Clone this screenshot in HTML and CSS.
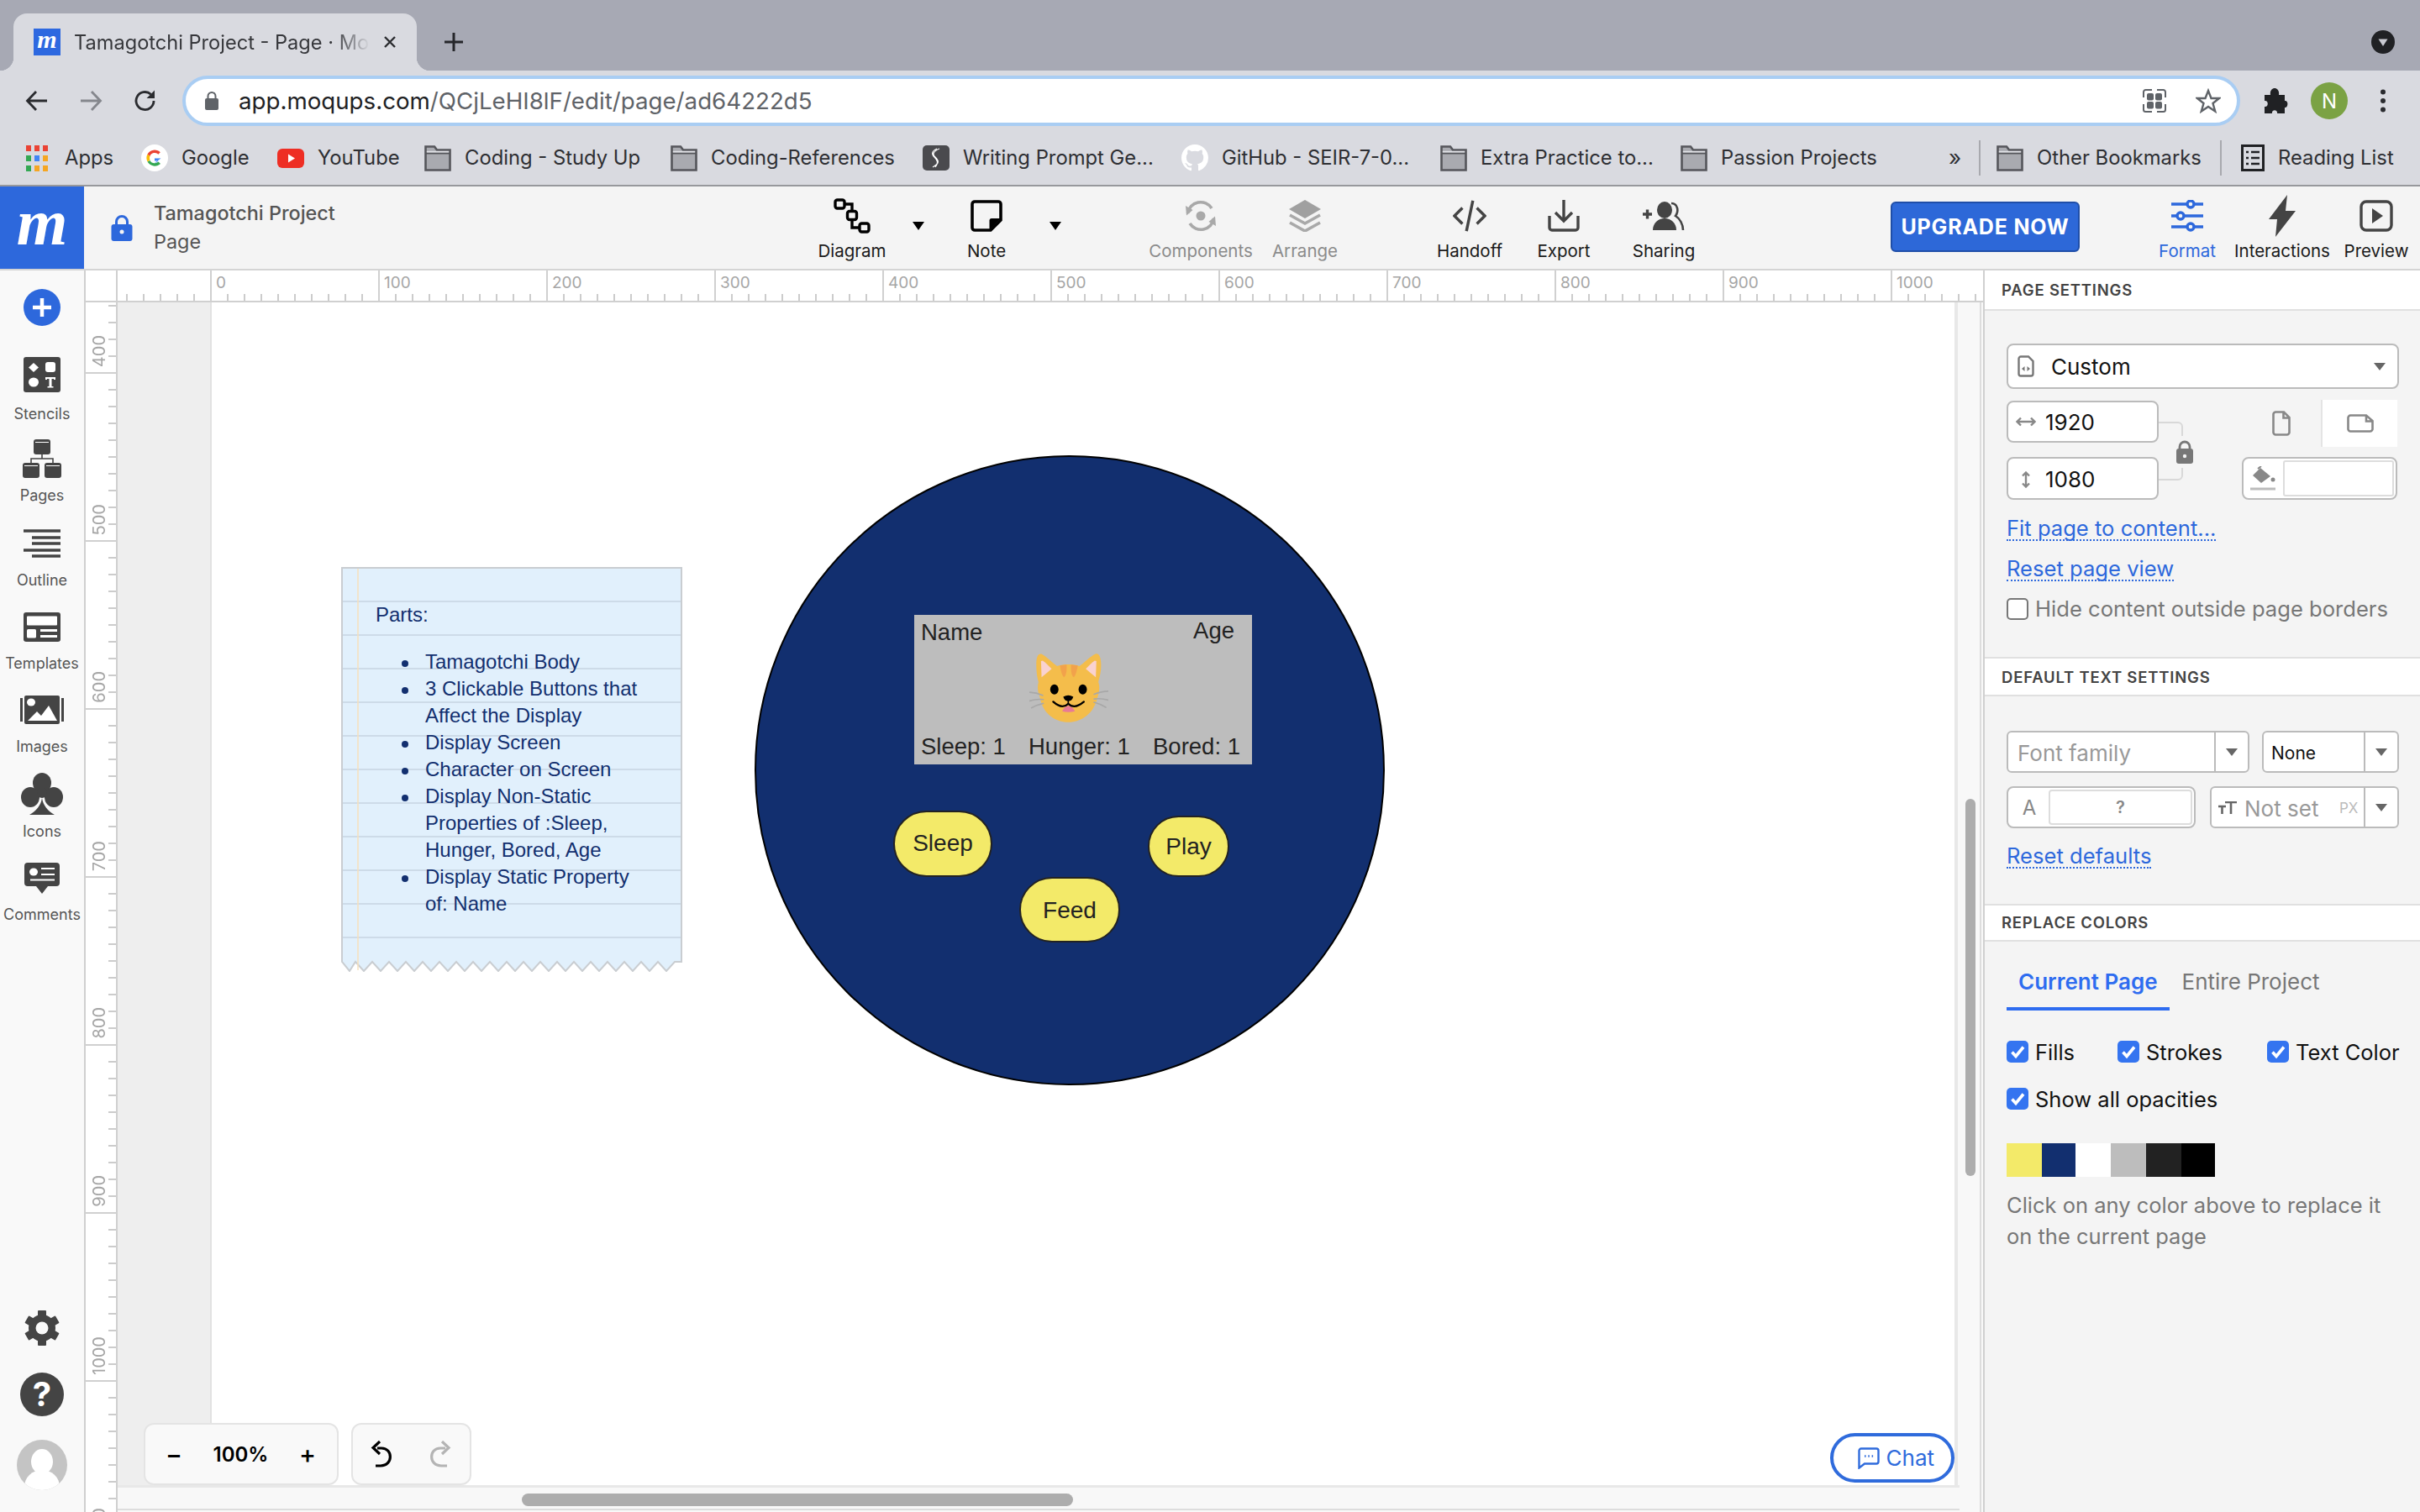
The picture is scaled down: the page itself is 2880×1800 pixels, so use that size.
FILE: index.html
```html
<!DOCTYPE html>
<html lang="en">
<head>
<meta charset="utf-8">
<title>Tamagotchi Project - Page · Moqups</title>
<link rel="stylesheet" href="styles.css">
</head>
<body>
<div class="screen">

  <div class="tabstrip">
    <div class="tab">
      <span class="favicon">m</span>
      <span class="tab-title">Tamagotchi Project - Page · Moqups</span>
      <svg class="tab-close" viewBox="0 0 18 18"><path d="M3 3 15 15M15 3 3 15" stroke="#2b2c30" stroke-width="2.4" fill="none"/></svg>
    </div>
    <svg class="new-tab" viewBox="0 0 24 24"><path d="M12 1V23M1 12H23" stroke="#26272b" stroke-width="3" fill="none"/></svg>
    <span class="tab-menu"><svg viewBox="0 0 28 28"><circle cx="14" cy="14" r="14" fill="#202124"/><path d="M8.500 10.500H19.500L14 19Z" fill="#c9cad2"/></svg></span>
  </div>

  <div class="addressbar">
    <svg class="nav-ico" viewBox="0 0 28 28"><path d="M26 14H3M13 3 2.500 14 13 25" stroke="#2a2b2f" stroke-width="2.800" fill="none"/></svg>
    <svg class="nav-ico" viewBox="0 0 28 28"><path d="M2 14H25M15 3 25.500 14 15 25" stroke="#85878d" stroke-width="2.800" fill="none"/></svg>
    <svg class="nav-ico" viewBox="0 0 28 28"><path d="M24 14A10.500 10.500 0 1 1 20.500 6.200" stroke="#2a2b2f" stroke-width="2.800" fill="none"/><path d="M25 1.500V11H15.500Z" fill="#2a2b2f"/></svg>
    <div class="urlbar">
      <svg class="url-lock" viewBox="0 0 18 24"><path d="M4.500 11V6.500a4.500 4.500 0 0 1 9 0V11" stroke="#5f6368" stroke-width="2" fill="none"/><rect x="1" y="9" width="16" height="14" rx="2" fill="#5f6368"/></svg>
      <span class="url-text"><span class="url-host">app.moqups.com</span>/QCjLeHI8lF/edit/page/ad64222d5</span>
      <svg class="url-qr" viewBox="0 0 30 28"><path d="M2 10V3.500a2.500 2.500 0 0 1 2.500-2.500H12M18 1h7.500a2.500 2.500 0 0 1 2.500 2.500V10M28 18v6.500a2.500 2.500 0 0 1-2.500 2.500H18M12 27H4.500a2.500 2.500 0 0 1-2.500-2.500V18" stroke="#5f6368" stroke-width="2" fill="none"/><rect x="6" y="5" width="8" height="8.500" rx="2" fill="#5f6368"/><rect x="16" y="5" width="8" height="8.500" rx="2" fill="#5f6368"/><rect x="6" y="15" width="8" height="8.500" rx="2" fill="#5f6368"/><rect x="16" y="15" width="8" height="8.500" rx="2" fill="#5f6368"/></svg>
      <svg class="url-star" viewBox="0 0 30 30"><path d="M15 3 18.500 12H28L20.500 18 23.200 27.500 15 22 6.800 27.500 9.500 18 2 12H11.500Z" stroke="#5f6368" stroke-width="2.400" fill="none"/></svg>
    </div>
    <svg class="ext-ico" viewBox="0 0 30 32"><path d="M2 9H9C8 3 12 1 14 1S20 3 19 9H26V16C31 15 30 25 26 24V31H17C18 26 10 26 11 31H2V23C7 24 7 15 2 16Z" fill="#202124"/></svg>
    <span class="profile">N</span>
    <svg class="dots-ico" viewBox="0 0 8 28"><circle cx="4" cy="3.500" r="3" fill="#2a2b2f"/><circle cx="4" cy="14" r="3" fill="#2a2b2f"/><circle cx="4" cy="24.500" r="3" fill="#2a2b2f"/></svg>
  </div>

  <div class="bookmarks">
    <div class="bm">
      <span class="apps-grid"><i class="c-r"></i><i class="c-r"></i><i class="c-r"></i><i class="c-g"></i><i class="c-b"></i><i class="c-y"></i><i class="c-g"></i><i class="c-y"></i><i class="c-y"></i></span>
      <span>Apps</span>
    </div>
    <div class="bm">
      <svg class="bm-ico" viewBox="0 0 32 32"><circle cx="16" cy="16" r="16" fill="#fff"/><path d="M23.500 16.500H16V19.500H20.300A5 5 0 0 1 16 22Z" fill="#4285f4"/><path d="M10.500 19A6 6 0 0 0 16 22.300A6 6 0 0 0 20.500 20.500L23 23A10 10 0 0 1 7.500 20.500Z" fill="#34a853"/><path d="M7.500 11.500A10 10 0 0 0 7.500 20.500L10.500 18.500A6 6 0 0 1 10.500 13.500Z" fill="#fbbc05"/><path d="M7.500 11.500A10 10 0 0 1 22.800 9.200L20.300 11.700A6 6 0 0 0 10.500 13.700Z" fill="#ea4335"/></svg>
      <span>Google</span>
    </div>
    <div class="bm">
      <svg class="bm-ico" viewBox="0 0 32 32"><rect x="0" y="5" width="32" height="23" rx="6" fill="#ee2e24"/><path d="M13 11.500 21 16.500 13 21.500Z" fill="#fff"/></svg>
      <span>YouTube</span>
    </div>
    <div class="bm">
      <svg class="bm-ico" viewBox="0 0 32 32"><use href="#folder"/></svg>
      <span>Coding - Study Up</span>
    </div>
    <div class="bm">
      <svg class="bm-ico" viewBox="0 0 32 32"><use href="#folder"/></svg>
      <span>Coding-References</span>
    </div>
    <div class="bm">
      <svg class="bm-ico" viewBox="0 0 32 32"><rect x="0" y="1" width="32" height="30" rx="5" fill="#4a4a4e"/><path d="M20 5C13 8 11 11 15 15S21 22 12 27M17 5C11 8 10 11 14 15S19 22 15 27" stroke="#fff" stroke-width="1.200" fill="none"/></svg>
      <span>Writing Prompt Ge...</span>
    </div>
    <div class="bm">
      <svg class="bm-ico" viewBox="0 0 16 16"><path fill="#fff" d="M8 0C3.580 0 0 3.580 0 8c0 3.540 2.290 6.530 5.470 7.590.4.070.55-.17.55-.38 0-.19-.01-.82-.01-1.490-2.010.37-2.530-.49-2.690-.94-.09-.23-.48-.94-.82-1.130-.28-.15-.68-.52-.01-.53.63-.01 1.080.58 1.230.82.72 1.210 1.870.87 2.330.66.07-.52.28-.87.51-1.070-1.780-.2-3.640-.89-3.640-3.950 0-.87.31-1.590.82-2.150-.08-.2-.36-1.020.08-2.120 0 0 .67-.21 2.200.82.64-.18 1.320-.27 2-.27.68 0 1.360.09 2 .27 1.530-1.040 2.200-.82 2.200-.82.44 1.100.16 1.920.08 2.120.51.56.82 1.270.82 2.150 0 3.070-1.870 3.750-3.650 3.950.29.25.54.73.54 1.480 0 1.070-.01 1.930-.01 2.200 0 .21.15.46.55.38A8.013 8.013 0 0016 8c0-4.420-3.580-8-8-8z"/></svg>
      <span>GitHub - SEIR-7-0...</span>
    </div>
    <div class="bm">
      <svg class="bm-ico" viewBox="0 0 32 32"><use href="#folder"/></svg>
      <span>Extra Practice to...</span>
    </div>
    <div class="bm">
      <svg class="bm-ico" viewBox="0 0 32 32"><use href="#folder"/></svg>
      <span>Passion Projects</span>
    </div>
    <div class="bm-more">»</div>
    <div class="bm-sep"></div>
    <div class="bm">
      <svg class="bm-ico" viewBox="0 0 32 32"><use href="#folder"/></svg>
      <span>Other Bookmarks</span>
    </div>
    <div class="bm-sep"></div>
    <div class="bm">
      <svg class="bm-ico bm-ico-list" viewBox="0 0 28 32"><rect x="1.500" y="1.500" width="25" height="29" stroke="#202124" stroke-width="3" fill="none"/><path d="M6 9H9M12 9H22M6 16H9M12 16H22M6 23H9M12 23H22" stroke="#202124" stroke-width="2.400" fill="none"/></svg>
      <span>Reading List</span>
    </div>
  </div>

  <svg class="defs" width="0" height="0"><defs><g id="folder"><path d="M1.500 30.500V2.500H12L15 6.500H30.500V30.500Z" fill="#a9aab0" stroke="#55565b" stroke-width="2.600"/><path d="M1.500 10.500H30.500" stroke="#55565b" stroke-width="2"/><path d="M2.800 7.800H29.200V9.500H2.800Z" fill="#e3e4e8"/></g></defs></svg>

  <div class="topbar">
    <div class="logo">m</div>
    <div class="project">
      <svg class="project-lock" viewBox="0 0 26 32"><path d="M6.500 14V9a6.500 6.500 0 0 1 13 0V14" stroke="#2d68dc" stroke-width="3" fill="none"/><rect x="0.500" y="12" width="25" height="20" rx="3" fill="#2d68dc"/><circle cx="13" cy="21" r="2.500" fill="#f4f4f4"/></svg>
      <div class="project-names"><div>Tamagotchi Project</div><div>Page</div></div>
    </div>
    <div class="tool">
      <svg class="tool-ico i44" viewBox="0 0 44 44"><g fill="none" stroke="#000" stroke-width="3.400"><rect x="2" y="3" width="11" height="10" rx="2.500"/><rect x="16.500" y="16.500" width="11" height="10" rx="2.500"/><rect x="31" y="31" width="11" height="10" rx="2.500"/><path d="M13 8H22V16.500M22 26.500V36H31"/></g></svg>
      <span>Diagram</span>
    </div>
    <div class="caret"></div>
    <div class="tool">
      <svg class="tool-ico i38" viewBox="0 0 38 38"><path d="M5 2H33A3 3 0 0 1 36 5V24L24 36H5A3 3 0 0 1 2 33V5A3 3 0 0 1 5 2Z" fill="none" stroke="#000" stroke-width="3.600"/><path d="M36 22H25A2.500 2.500 0 0 0 22.500 24.500V36Z" fill="#000"/></svg>
      <span>Note</span>
    </div>
    <div class="caret"></div>
    <div class="gap"></div>
    <div class="tool tool-off">
      <svg class="tool-ico i38" viewBox="0 0 38 38"><circle cx="19" cy="19" r="5.500" fill="#a9a9a9"/><path d="M3.500 16A15.500 15.500 0 0 1 32 10M34.500 22A15.500 15.500 0 0 1 6 28" stroke="#a9a9a9" stroke-width="3.600" fill="none"/><path d="M1 7 9.500 12 2 18.500ZM37 31 28.500 26 36 19.500Z" fill="#a9a9a9"/></svg>
      <span>Components</span>
    </div>
    <div class="tool tool-off">
      <svg class="tool-ico i40" viewBox="0 0 40 38"><path d="M20 0 39 11 20 22 1 11Z" fill="#a0a0a0"/><path d="M2 18 20 28 38 18M2 27 20 37 38 27" stroke="#a9a9a9" stroke-width="3.600" fill="none"/></svg>
      <span>Arrange</span>
    </div>
    <div class="gap"></div>
    <div class="tool">
      <svg class="tool-ico i40" viewBox="0 0 42 38"><path d="M12 9 2 19 12 29M30 9 40 19 30 29M25 0 17 38" stroke="#444" stroke-width="3.600" fill="none"/></svg>
      <span>Handoff</span>
    </div>
    <div class="tool">
      <svg class="tool-ico i38" viewBox="0 0 38 38"><path d="M19 0V24M9 15 19 25 29 15M2 19V33A3 3 0 0 0 5 36H33A3 3 0 0 0 36 33V19" stroke="#444" stroke-width="3.400" fill="none"/></svg>
      <span>Export</span>
    </div>
    <div class="tool">
      <svg class="tool-ico i48" viewBox="0 0 50 36"><path d="M0 15H11M5.500 9.500V20.500" stroke="#444" stroke-width="3.400" fill="none"/><ellipse cx="26" cy="10" rx="9" ry="10" fill="#444"/><path d="M12 34C12 26 18 20 26 20S40 26 40 34Z" fill="#444"/><path d="M34 2C42 2 43 12 39 17C44 20 48 27 48 34" stroke="#444" stroke-width="2.600" fill="none"/></svg>
      <span>Sharing</span>
    </div>
    <div class="gap"></div>
    <div class="upgrade">UPGRADE NOW</div>
    <div class="gap"></div>
    <div class="tool tool-on">
      <svg class="tool-ico i38" viewBox="0 0 38 38"><g stroke="#2d68dc" stroke-width="3.400" fill="#f4f4f4"><path d="M0 5H38M0 19H38M0 32H38" fill="none"/><circle cx="23" cy="5" r="4"/><circle cx="11" cy="19" r="4"/><circle cx="23" cy="32" r="4"/></g></svg>
      <span>Format</span>
    </div>
    <div class="tool">
      <svg class="tool-ico i-bolt" viewBox="0 0 32 50"><path d="M22 0 0 29H10L8 50 32 19H20Z" fill="#444"/></svg>
      <span>Interactions</span>
    </div>
    <div class="tool">
      <svg class="tool-ico i40" viewBox="0 0 40 38"><rect x="2" y="2" width="36" height="34" rx="6" stroke="#444" stroke-width="3.400" fill="none"/><path d="M15 10 28 19 15 28Z" fill="#444"/></svg>
      <span>Preview</span>
    </div>
  </div>

  <div class="workspace">
    <nav class="sidebar">
      <svg class="side-add" viewBox="0 0 44 44"><circle cx="22" cy="22" r="22" fill="#2d68dc"/><path d="M22 11V33M11 22H33" stroke="#fff" stroke-width="4.500"/></svg>
      <div class="side-item s-stencils">
        <svg viewBox="0 0 44 42" class="side-ico h42"><rect width="44" height="42" rx="3" fill="#444"/><path d="M12 7 18 12.500 12 18 6 12.500Z" fill="#fff"/><rect x="26" y="6" width="12" height="12" rx="3" fill="#fff"/><ellipse cx="12" cy="30" rx="6" ry="5.500" fill="#fff"/><path d="M26 24H38V27H36V26H33.500V35H35.500V36.500H28.500V35H30.500V26H28V27H26Z" fill="#fff"/></svg>
        <span>Stencils</span>
      </div>
      <div class="side-item s-pages">
        <svg viewBox="0 0 46 46" class="side-ico h46"><rect x="13" y="0" width="20" height="18" rx="3" fill="#444"/><rect x="0" y="28" width="20" height="18" rx="3" fill="#444"/><rect x="26" y="28" width="20" height="18" rx="3" fill="#444"/><path d="M15 3.500H31M2 31.500H18M28 31.500H44" stroke="#fff" stroke-width="1.200"/><path d="M23 18V23M10 28V23H36V28" stroke="#444" stroke-width="1.600" fill="none"/></svg>
        <span>Pages</span>
      </div>
      <div class="side-item s-outline">
        <svg viewBox="0 0 44 34" class="side-ico h34"><path d="M0 2H44M10 10H44M10 17H44M0 25H44M10 32H44" stroke="#444" stroke-width="3.600"/></svg>
        <span>Outline</span>
      </div>
      <div class="side-item s-templates">
        <svg viewBox="0 0 44 35" class="side-ico h35"><rect width="44" height="35" rx="3" fill="#444"/><rect x="4" y="4.500" width="36" height="11" rx="1" fill="#fff"/><rect x="4" y="20" width="11" height="10.500" rx="1.500" fill="#fff"/><path d="M20 21.500H40M20 28.500H40" stroke="#fff" stroke-width="3"/></svg>
        <span>Templates</span>
      </div>
      <div class="side-item s-images">
        <svg viewBox="0 0 52 34" class="side-ico h34 w52"><rect x="0" y="3" width="3" height="28" fill="#444"/><rect x="49" y="3" width="3" height="28" fill="#444"/><rect x="5" y="0" width="42" height="34" rx="2" fill="#444"/><ellipse cx="13" cy="8" rx="5" ry="4.500" fill="#fff"/><path d="M9 30 20 19 25 24 34 12 44 30Z" fill="#fff"/></svg>
        <span>Images</span>
      </div>
      <div class="side-item s-icons">
        <svg viewBox="0 0 50 50" class="side-ico h50"><ellipse cx="25" cy="12" rx="11" ry="12" fill="#444"/><ellipse cx="11" cy="29" rx="11" ry="12" fill="#444"/><ellipse cx="39" cy="29" rx="11" ry="12" fill="#444"/><circle cx="25" cy="24" r="6" fill="#444"/><path d="M25 30C24 38 18 46 10 50H40C32 46 26 38 25 30Z" fill="#444"/></svg>
        <span>Icons</span>
      </div>
      <div class="side-item s-comments">
        <svg viewBox="0 0 42 38" class="side-ico h38"><path d="M4 0H38A4 4 0 0 1 42 4V24A4 4 0 0 1 38 28H28L21 37 14 28H4A4 4 0 0 1 0 24V4A4 4 0 0 1 4 0Z" fill="#444"/><ellipse cx="11" cy="11" rx="5" ry="4.500" fill="#fff"/><path d="M20 7H36M20 14H36M7 20.500H36" stroke="#fff" stroke-width="2.200"/></svg>
        <span>Comments</span>
      </div>
      <div class="side-bottom">
        <svg viewBox="0 0 44 42" class="side-ico h42"><g fill="#444"><rect x="17" y="0" width="10" height="42" rx="1"/><rect x="17" y="0" width="10" height="42" rx="1" transform="rotate(60 22 21)"/><rect x="17" y="0" width="10" height="42" rx="1" transform="rotate(120 22 21)"/><circle cx="22" cy="21" r="16"/></g><circle cx="22" cy="21" r="7.500" fill="#f9f9f9"/></svg>
        <div class="help">?</div>
        <svg viewBox="0 0 60 60" class="avatar"><defs><clipPath id="avatar-clip"><circle cx="30" cy="30" r="30"/></clipPath></defs><circle cx="30" cy="30" r="30" fill="#c4c4c4"/><g clip-path="url(#avatar-clip)" fill="#fff"><ellipse cx="30" cy="26" rx="13" ry="15"/><ellipse cx="30" cy="56" rx="21" ry="20"/></g></svg>
      </div>
    </nav>

    <div class="stage">
      <div class="ruler-top">
        <div class="rt-corner"></div>
        <div class="rt-lead"></div>
        <div class="rt-cell">0</div><div class="rt-cell">100</div><div class="rt-cell">200</div><div class="rt-cell">300</div><div class="rt-cell">400</div><div class="rt-cell">500</div><div class="rt-cell">600</div><div class="rt-cell">700</div><div class="rt-cell">800</div><div class="rt-cell">900</div><div class="rt-cell rt-last">1000</div>
      </div>
      <div class="stage-body">
        <div class="ruler-left">
          <div class="rl-cell rl-first"><span>400</span></div><div class="rl-cell"><span>500</span></div><div class="rl-cell"><span>600</span></div><div class="rl-cell"><span>700</span></div><div class="rl-cell"><span>800</span></div><div class="rl-cell"><span>900</span></div><div class="rl-cell"><span>1000</span></div><div class="rl-cell"><span>1100</span></div>
        </div>
        <div class="canvas">
          <div class="pasteboard"></div>
          <div class="page"></div>

          <div class="note">
            <svg class="note-bg" viewBox="0 0 406 482"><path d="M1 1H405V470H397L387 481 377 470 367 481 357 470 347 481 337 470 327 481 317 470 307 481 297 470 287 481 277 470 267 481 257 470 247 481 237 470 227 481 217 470 207 481 197 470 187 481 177 470 167 481 157 470 147 481 137 470 127 481 117 470 107 481 97 470 87 481 77 470 67 481 57 470 47 481 37 470 27 481 17 470 10 481 1 470Z" fill="#e1f0fc" stroke="#c9cdd1" stroke-width="2"/><path d="M2 41H404M2 81H404M2 121H404M2 161H404M2 201H404M2 241H404M2 281H404M2 321H404M2 361H404M2 401H404M2 441H404" stroke="#c6d4e1" stroke-width="1.500"/><path d="M20 2V480" stroke="#f7e0bd" stroke-width="1.500"/></svg>
            <div class="note-text">
              <p>Parts:</p>
              <ul>
                <li>Tamagotchi Body</li>
                <li>3 Clickable Buttons that Affect the Display</li>
                <li>Display Screen</li>
                <li>Character on Screen</li>
                <li>Display Non-Static Properties of :Sleep, Hunger, Bored, Age</li>
                <li>Display Static Property of: Name</li>
              </ul>
            </div>
          </div>

          <div class="body-circle"></div>
          <div class="lcd">
            <div class="lcd-top"><span>Name</span><span class="lcd-age">Age</span></div>
            <svg class="cat" viewBox="0 0 284 250">
              <path d="M25 40C25 15 32 0 45 5C60 12 85 38 100 48C125 40 155 40 180 48C195 38 222 10 238 4C252 0 258 20 258 45C258 70 252 90 248 105C254 120 252 140 245 160C230 230 175 250 140 250C105 250 50 230 38 160C30 140 28 120 33 105C28 90 25 65 25 40Z" fill="#f4bd4b"/>
              <path d="M42 30L44 88Q62 74 80 58Q62 38 48 28Z" fill="#f9d2d0"/><path d="M241 30L239 88Q221 74 203 58Q221 38 235 28Z" fill="#f9d2d0"/>
              <path d="M110 46Q115 80 124 88Q136 82 134 43ZM174 46Q169 80 160 88Q148 82 150 43Z" fill="#f2a24b"/>
              <ellipse cx="90" cy="132" rx="15" ry="18" fill="#000"/><ellipse cx="192" cy="132" rx="15" ry="18" fill="#000"/>
              <path d="M118 210Q140 172 164 210Q140 216 118 210Z" fill="#e87a96"/>
              <path d="M86 176Q118 205 140 183Q162 205 196 176" stroke="#000" stroke-width="7" fill="none" stroke-linecap="round"/>
              <path d="M122 158Q140 148 158 158Q154 172 140 174Q126 172 122 158Z" fill="#000"/><path d="M140 172V184" stroke="#000" stroke-width="5"/>
              <path d="M1 142Q25 143 48 153M1 173Q25 165 50 168M8 198Q25 188 50 182M283 138Q260 138 233 149M283 170Q260 163 233 166M275 196Q258 185 233 178" stroke="#a8a8a8" stroke-width="5" fill="none" stroke-linecap="round"/>
            </svg>
            <div class="lcd-stats"><span>Sleep: 1</span><span>Hunger: 1</span><span>Bored: 1</span></div>
          </div>
          <div class="pill pill-sleep">Sleep</div>
          <div class="pill pill-play">Play</div>
          <div class="pill pill-feed">Feed</div>

          <div class="zoom-tools">
            <div class="tools-group tools-zoom">
              <span class="z-btn">−</span><span class="z-val">100%</span><span class="z-btn">+</span>
            </div>
            <div class="tools-group tools-undo">
              <svg viewBox="0 0 28 32" class="undo-ico"><path d="M8 9H13C27 9 27 30 12 30H6" stroke="#000" stroke-width="3.200" fill="none"/><path d="M11 1 3 8.500 11 16" stroke="#000" stroke-width="3.200" fill="none"/></svg>
              <svg viewBox="0 0 28 32" class="undo-ico"><path d="M21 9H15C1 9 1 30 16 30H23" stroke="#b4b4b4" stroke-width="3.200" fill="none"/><path d="M17 1 25 8.500 17 16" stroke="#b4b4b4" stroke-width="3.200" fill="none"/></svg>
            </div>
          </div>

          <div class="chat">
            <svg class="chat-ico" viewBox="0 0 26 26"><path d="M4 1.500H22A2.500 2.500 0 0 1 24.500 4V17A2.500 2.500 0 0 1 22 19.500H8L1.500 24.500V4A2.500 2.500 0 0 1 4 1.500Z" stroke="#2f6bdc" stroke-width="2.400" fill="none"/><path d="M8 10.500H9.500M12.300 10.500H13.800M16.600 10.500H18.100" stroke="#2f6bdc" stroke-width="2.400"/></svg>
            <span>Chat</span>
          </div>

          <div class="scroll-strip-r"><div class="thumb-v"></div></div>
          <div class="scroll-strip-b"><div class="thumb-h"></div></div>
        </div>
      </div>
    </div>

    <aside class="panel">
      <div class="panel-head">PAGE SETTINGS</div>
      <section class="panel-body pb-page">
        <div class="select">
          <svg class="sel-ico" viewBox="0 0 20 26"><path d="M4 1.500H13L18.500 7V22A2.500 2.500 0 0 1 16 24.500H4A2.500 2.500 0 0 1 1.500 22V4A2.500 2.500 0 0 1 4 1.500Z" stroke="#777" stroke-width="2.400" fill="none"/><path d="M8.500 13V19L5 16ZM11.500 13V19L15 16Z" fill="#777"/></svg>
          <span>Custom</span>
          <i class="tri tri-end"></i>
        </div>
        <div class="size-grid">
          <div class="num num-w"><svg class="num-ico" viewBox="0 0 24 12"><path d="M1.500 6H22.500M6 1.500 1.500 6 6 10.500M18 1.500 22.500 6 18 10.500" stroke="#888" stroke-width="2.400" fill="none"/></svg><span>1920</span></div>
          <div class="lock-link">
            <svg viewBox="0 0 44 80" class="lock-svg"><path d="M0 5H23A5 5 0 0 1 28 10V21M0 73H23A5 5 0 0 0 28 68V59" stroke="#d8d8d8" stroke-width="2" fill="none"/><path d="M25 37V34A6 6 0 0 1 37 34V37" stroke="#777" stroke-width="2.800" fill="none"/><rect x="21" y="36" width="20" height="18" rx="3" fill="#777"/><circle cx="31" cy="45" r="2.200" fill="#f4f4f4"/></svg>
          </div>
          <div class="orient">
            <span class="or-opt"><svg viewBox="0 0 22 30" class="or-p"><path d="M4 1.500H14L20.500 8V25A3 3 0 0 1 17.500 28.500H4A3 3 0 0 1 1.500 25V4A3 3 0 0 1 4 1.500ZM13.500 1.500V8.500H20.500" stroke="#888" stroke-width="2.600" fill="none"/></svg></span>
            <span class="or-opt or-on"><svg viewBox="0 0 32 22" class="or-l"><path d="M4 1.500H23L30.500 8V17A3 3 0 0 1 27.500 20.500H4A3 3 0 0 1 1.500 17V4A3 3 0 0 1 4 1.500ZM23 1.500V8.500H30.500" stroke="#888" stroke-width="2.600" fill="none"/></svg></span>
          </div>
          <div class="num num-h"><svg class="num-ico" viewBox="0 0 24 20"><path d="M12 1.500V18.500M8 5.500 12 1.500 16 5.500M8 14.500 12 18.500 16 14.500" stroke="#888" stroke-width="2.400" fill="none"/></svg><span>1080</span></div>
          <div class="fill-box">
            <svg class="fill-ico" viewBox="0 0 30 30"><path d="M12 2 24 12 13 20 3 11Z" fill="#888"/><path d="M9 3 13 0" stroke="#888" stroke-width="2"/><circle cx="27" cy="16" r="2.500" fill="#888"/><path d="M0 27H30" stroke="#bbb" stroke-width="3"/></svg>
            <span class="fill-swatch"></span>
          </div>
        </div>
        <a class="link link-first">Fit page to content...</a>
        <a class="link">Reset page view</a>
        <label class="hide-row"><i class="check-off"></i><span>Hide content outside page borders</span></label>
      </section>

      <div class="panel-head">DEFAULT TEXT SETTINGS</div>
      <section class="panel-body pb-text">
        <div class="text-row">
          <div class="combo c-font"><span class="muted">Font family</span><b><i class="tri"></i></b></div>
          <div class="combo c-none"><span class="small">None</span><b><i class="tri"></i></b></div>
        </div>
        <div class="text-row text-row-2">
          <div class="color-a"><span class="a-letter">A</span><span class="a-field">?</span></div>
          <div class="combo c-size">
            <svg class="tt-ico" viewBox="0 0 22 16"><path d="M8 1H22M15 1V15M0 6H9M4.500 6V15" stroke="#666" stroke-width="2.600" fill="none"/></svg>
            <span class="muted">Not set</span><em>PX</em><b><i class="tri"></i></b>
          </div>
        </div>
        <a class="link link-reset">Reset defaults</a>
      </section>

      <div class="panel-head head-colors">REPLACE COLORS</div>
      <section class="panel-body pb-colors">
        <div class="tabs"><span class="tab-on">Current Page</span><span class="tab-off">Entire Project</span></div>
        <div class="check-row">
          <label class="check"><i class="check-on"><svg viewBox="0 0 26 26"><path d="M6.500 13.500 11 18.500 20 7.500" stroke="#fff" stroke-width="3.600" fill="none"/></svg></i><span>Fills</span></label>
          <label class="check"><i class="check-on"><svg viewBox="0 0 26 26"><path d="M6.500 13.500 11 18.500 20 7.500" stroke="#fff" stroke-width="3.600" fill="none"/></svg></i><span>Strokes</span></label>
          <label class="check"><i class="check-on"><svg viewBox="0 0 26 26"><path d="M6.500 13.500 11 18.500 20 7.500" stroke="#fff" stroke-width="3.600" fill="none"/></svg></i><span>Text Color</span></label>
        </div>
        <label class="check check-solo"><i class="check-on"><svg viewBox="0 0 26 26"><path d="M6.500 13.500 11 18.500 20 7.500" stroke="#fff" stroke-width="3.600" fill="none"/></svg></i><span>Show all opacities</span></label>
        <div class="swatches"><i class="sw-1"></i><i class="sw-2"></i><i class="sw-3"></i><i class="sw-4"></i><i class="sw-5"></i><i class="sw-6"></i></div>
        <p class="hint">Click on any color above to replace it on the current page</p>
      </section>
    </aside>
  </div>
</div>
</body>
</html>
```
FILE: styles.css
```css
* { box-sizing: border-box; }
html, body { margin: 0; padding: 0; }
body { font-family: Inter, "Liberation Sans", sans-serif; color: #222; background: #fff; }
.screen { width: 2880px; height: 1800px; overflow: hidden; display: flex; flex-direction: column; }
.defs { position: absolute; }

/* browser tab strip */
.tabstrip { height: 84px; flex: none; background: #a7a9b4; display: flex; align-items: flex-end; position: relative; }
.tab { width: 480px; height: 68px; margin-left: 16px; background: #d9dae0; border-radius: 16px 16px 0 0; display: flex; align-items: center; padding-left: 24px; position: relative; }
.tab::before, .tab::after { content: ""; position: absolute; bottom: 0; width: 16px; height: 16px; }
.tab::before { left: -16px; background: radial-gradient(circle at 0 0, transparent 16px, #d9dae0 16.5px); }
.tab::after { right: -16px; background: radial-gradient(circle at 100% 0, transparent 16px, #d9dae0 16.5px); }
.favicon { width: 32px; height: 32px; background: #2d68e0; color: #fff; font: italic 700 30px/26px "Liberation Serif", serif; text-align: center; flex: none; }
.tab-title { margin-left: 16px; width: 352px; white-space: nowrap; overflow: hidden; font-size: 23.6px; color: #36373b; -webkit-mask-image: linear-gradient(to right, #000 88%, transparent 100%); mask-image: linear-gradient(to right, #000 88%, transparent 100%); flex: none; }
.tab-close { width: 18px; height: 18px; margin-left: 15px; flex: none; }
.new-tab { width: 24px; height: 24px; margin-left: 32px; margin-bottom: 22px; }
.tab-menu { position: absolute; right: 30px; top: 36px; width: 28px; height: 28px; }
.tab-menu svg { display: block; width: 28px; height: 28px; }

/* address bar */
.addressbar { height: 66px; flex: none; padding-top: 6px; background: #d9dae0; display: grid; grid-template-columns: 88px 40px 89px 1fr 88px 40px 88px; align-items: center; justify-items: center; }
.nav-ico { width: 28px; height: 28px; }
.urlbar { justify-self: stretch; height: 60px; border: 4px solid #a9cdf3; border-radius: 30px; background: #fff; display: flex; align-items: center; padding-left: 22px; padding-right: 19px; margin-right: -2px; }
.url-lock { width: 18px; height: 24px; flex: none; }
.url-text { margin-left: 23px; font-size: 27.7px; color: #5f6368; flex: 1; white-space: nowrap; }
.url-host { color: #202124; }
.url-qr { width: 30px; height: 28px; flex: none; }
.url-star { width: 30px; height: 30px; margin-left: 34px; flex: none; }
.ext-ico { width: 30px; height: 32px; }
.profile { width: 44px; height: 44px; border-radius: 50%; background: #7ba244; color: #fff; font-size: 24px; display: flex; align-items: center; justify-content: center; }
.dots-ico { width: 8px; height: 28px; }

/* bookmarks */
.bookmarks { height: 72px; flex: none; padding-top: 5px; background: #d9dae0; border-bottom: 2px solid #97989c; display: grid; grid-template-columns: 137px 162px 175px 293px 300px 308px 308px 286px 319px 36px 21px 266px 25px 1fr; padding-left: 31px; align-items: center; font-size: 23.8px; color: #2e2f33; }
.bm { display: flex; align-items: center; gap: 16px; white-space: nowrap; }
.bm-ico { width: 32px; height: 32px; flex: none; }
.bm-ico-list { width: 28px; }
.apps-grid { width: 26px; height: 30px; display: grid; grid-template-columns: repeat(3, 6px); grid-auto-rows: 7px; gap: 5px 4px; margin-right: 4px; }
.c-r { background: #ea4335; } .c-g { background: #34a853; } .c-b { background: #4285f4; } .c-y { background: #f5a623; }
.bm-more { font-size: 26px; }
.bm-sep { width: 2px; height: 42px; background: #a8a9ae; }

/* app toolbar */
.topbar { height: 100px; flex: none; background: #f4f4f4; display: grid; grid-template-columns: 100px 860px 108px 50px 112px 52px 80px 134px 114px 85px 108px 116px 122px 209px 225px 75px 106px 120px 104px; align-items: start; border-bottom: 2px solid #d4d4d4; }
.logo { height: 98px; background: #2d68dc; color: #fff; font: italic 700 78px/86px "Liberation Serif", serif; text-align: center; }
.project { display: flex; align-items: center; height: 98px; padding-left: 32px; }
.project-lock { width: 26px; height: 32px; flex: none; }
.project-names { margin-left: 25px; font-size: 23.4px; font-weight: 500; color: #555; line-height: 34px; }
.project-names div:last-child { font-weight: 400; }
.tool { display: flex; flex-direction: column; align-items: center; height: 98px; justify-content: flex-end; padding-bottom: 9px; font-size: 20.5px; color: #1a1a1a; white-space: nowrap; position: relative; }
.tool-ico { position: absolute; top: 16px; }
.i44 { width: 44px; height: 44px; top: 13px; }
.i38 { width: 38px; height: 38px; }
.i40 { width: 40px; height: 38px; }
.i48 { width: 50px; height: 36px; top: 18px; }
.i-bolt { width: 32px; height: 50px; top: 10px; }
.tool-off { color: #8b8b8b; }
.tool-on { color: #2d68dc; }
.caret { width: 0; height: 0; justify-self: center; margin-top: 42px; border: 8px solid transparent; border-top: 10px solid #000; border-bottom: 0; border-left-width: 7px; border-right-width: 7px; }
.upgrade { margin-top: 18px; height: 60px; background: #2d68d8; border: 2px solid #1f4ea8; border-radius: 6px; color: #fff; font-size: 25px; font-weight: 700; letter-spacing: 0.8px; display: flex; align-items: center; justify-content: center; white-space: nowrap; }

/* workspace */
.workspace { flex: 1; display: grid; grid-template-columns: 102px 2258px 520px; min-height: 0; }
.sidebar { background: #f9f9f9; border-right: 2px solid #d0d0d0; position: relative; display: flex; flex-direction: column; align-items: center; padding-top: 22px; overflow: hidden; }
.side-add { width: 44px; height: 44px; flex: none; margin-bottom: 23px; }
.side-item { display: flex; flex-direction: column; align-items: center; font-size: 18px; color: #555; flex: none; height: 99px; width: 100%; justify-content: flex-end; padding-bottom: 7px; position: relative; white-space: nowrap; }
.side-ico { display: block; width: 44px; }
.side-item .side-ico { position: absolute; top: 14px; }
.h42 { height: 42px; }
.h46 { height: 46px; width: 46px; }
.h34 { height: 34px; }
.h35 { height: 35px; }
.h38 { height: 38px; width: 42px; }
.h50 { height: 50px; width: 50px; }
.w52 { width: 52px; }
.s-pages { padding-bottom: 9px; }
.s-pages .side-ico { top: 13px; }
.s-outline .side-ico { top: 21px; }
.s-templates .side-ico { top: 21px; }
.s-images .side-ico { top: 21px; }
.s-icons { padding-bottom: 5px; }
.s-icons .side-ico { top: 14px; }
.s-comments { padding-bottom: 5px; }
.s-comments .side-ico { top: 22px; }
.side-bottom { position: absolute; left: 0; right: 0; top: 1238px; display: flex; flex-direction: column; align-items: center; }
.help { width: 52px; height: 52px; margin-top: 32px; border-radius: 50%; background: #444; color: #fff; font-size: 40px; font-weight: 700; line-height: 52px; text-align: center; }
.avatar { width: 60px; height: 60px; margin-top: 28px; }

/* stage */
.stage { display: flex; flex-direction: column; min-width: 0; min-height: 0; }
.ruler-top { height: 38px; flex: none; background: #fff; display: flex; border-bottom: 2px solid #d0d0d0; }
.rt-corner { width: 36px; flex: none; }
.rt-lead { width: 112px; flex: none; border-left: 2px solid #d0d0d0; background: repeating-linear-gradient(to right, transparent 0 10px, #ccc 10px 12px, transparent 12px 20px) 0 100%/100% 8px no-repeat; }
.rt-cell { width: 200px; flex: none; border-left: 2px solid #d0d0d0; padding-left: 5px; font-size: 19px; line-height: 30px; color: #a6a6a6; background: repeating-linear-gradient(to right, transparent 0 18px, #ccc 18px 20px) 0 100%/100% 8px no-repeat; }
.rt-last { width: 110px; }
.stage-body { flex: 1; display: flex; min-height: 0; }
.ruler-left { width: 38px; flex: none; border-right: 2px solid #d0d0d0; background: #fff; overflow: hidden; }
.rl-cell { height: 200px; border-bottom: 2px solid #d0d0d0; position: relative; background: repeating-linear-gradient(to top, transparent 0 18px, #ccc 18px 20px) 100% 0/9px 100% no-repeat; }
.rl-first { height: 85px; }
.rl-cell span { position: absolute; left: 6px; bottom: 6px; writing-mode: vertical-rl; transform: rotate(180deg); font-size: 20px; line-height: 20px; color: #a6a6a6; }
.canvas { flex: 1; position: relative; overflow: hidden; background: #f8f8f8; min-width: 0; }
.pasteboard { position: absolute; left: 0; top: 0; width: 110px; height: 1410px; background: #eeeeee; }
.page { position: absolute; left: 110px; top: 0; width: 2080px; height: 1410px; background: #fff; border-left: 2px solid #e2e2e2; border-right: 4px solid #e8e8e8; }

/* note */
.note { position: absolute; left: 266px; top: 315px; width: 406px; height: 482px; font-family: "Liberation Sans", Arial, sans-serif; color: #122f6f; font-size: 24px; line-height: 32px; }
.note-bg { position: absolute; inset: 0; width: 406px; height: 482px; }
.note-text { position: relative; padding: 41px 20px 0 41px; }
.note-text p { margin: 0 0 24px; }
.note-text ul { margin: 0; padding: 0 0 0 59px; width: 330px; list-style: none; }
.note-text li { position: relative; }
.note-text li::before { content: ""; position: absolute; left: -28px; top: 14px; width: 8px; height: 8px; border-radius: 50%; background: #122f6f; }

/* body + lcd */
.body-circle { position: absolute; left: 758px; top: 182px; width: 750px; height: 750px; border-radius: 50%; background: #122f6f; border: 2px solid #000; }
.lcd { position: absolute; left: 948px; top: 372px; width: 402px; height: 178px; background: #bdbdbd; font-family: "Liberation Sans", Arial, sans-serif; font-size: 27.5px; line-height: 32px; color: #222; }
.lcd-top { display: flex; justify-content: space-between; padding: 5px 21px 0 8px; }
.lcd-age { margin-top: -2px; }
.cat { position: absolute; left: 137px; top: 45px; width: 94px; height: 83px; }
.lcd-stats { position: absolute; left: 8px; top: 141px; display: grid; grid-template-columns: 128px 148px auto; }
.pill { position: absolute; background: #f3ea69; border: 2px solid #222; border-radius: 40px; font-family: "Liberation Sans", Arial, sans-serif; font-size: 28px; color: #222; display: flex; align-items: center; justify-content: center; }
.pill-sleep { left: 923px; top: 605px; width: 118px; height: 79px; padding-bottom: 2px; }
.pill-play { left: 1226px; top: 611px; width: 97px; height: 73px; }
.pill-feed { left: 1073px; top: 684px; width: 120px; height: 78px; padding-top: 1px; }

/* floating controls */
.zoom-tools { position: absolute; left: 31px; top: 1334px; display: flex; gap: 15px; }
.tools-group { height: 74px; background: #f9f9f9; border: 2px solid #e4e4e4; border-radius: 12px; display: flex; align-items: center; }
.tools-zoom { width: 232px; justify-content: space-between; padding: 0 25px 0 24px; font-weight: 600; color: #000; }
.z-btn { font-size: 30px; font-weight: 500; line-height: 30px; }
.z-val { font-size: 24px; }
.tools-undo { width: 143px; justify-content: space-between; padding: 0 22px 0 21px; }
.undo-ico { width: 28px; height: 32px; }
.chat { position: absolute; left: 2038px; top: 1346px; width: 148px; height: 59px; border: 4px solid #2f6bdc; border-radius: 30px; background: #fff; color: #2f6bdc; font-size: 26px; display: flex; align-items: center; justify-content: flex-end; gap: 8px; padding-right: 20px; }
.chat-ico { width: 26px; height: 26px; }
.scroll-strip-r { position: absolute; left: 2190px; top: 0; bottom: 0; width: 28px; background: #f8f8f8; border-right: 2px solid #ddd; }
.thumb-v { position: absolute; left: 9px; top: 591px; width: 12px; height: 449px; border-radius: 6px; background: #adadad; }
.scroll-strip-b { position: absolute; left: 0; right: 28px; top: 1408px; height: 30px; border-top: 3px solid #e8e8e8; border-bottom: 2px solid #ddd; }
.thumb-h { position: absolute; left: 481px; top: 7px; width: 656px; height: 15px; border-radius: 8px; background: #adadad; }

/* right panel */
.panel { background: #f4f4f4; border-left: 2px solid #d0d0d0; min-width: 0; overflow: hidden; }
.panel-head { height: 47px; background: #fff; border-top: 2px solid #e0e0e0; border-bottom: 2px solid #e0e0e0; padding-left: 20px; font-size: 18.5px; font-weight: 600; letter-spacing: 0.8px; color: #444; line-height: 44px; white-space: nowrap; }
.panel > .panel-head:first-child { border-top-color: transparent; height: 48px; line-height: 42px; }
.panel > .head-colors { height: 45px; line-height: 41px; }
.panel-body { padding-left: 26px; padding-right: 25px; }
.pb-page { padding-top: 39px; padding-bottom: 39px; }
.select { height: 54px; background: #fff; border: 2px solid #bbb; border-radius: 8px; display: flex; align-items: center; padding-left: 11px; font-size: 26px; color: #111; }
.sel-ico { width: 20px; height: 26px; margin-right: 20px; }
.tri { display: block; width: 0; height: 0; border-left: 7px solid transparent; border-right: 7px solid transparent; border-top: 9px solid #666; }
.tri-end { margin-left: auto; margin-right: 14px; }
.size-grid { margin-top: 14px; display: grid; grid-template-columns: 181px 99px 185px; grid-template-rows: 50px 51px; row-gap: 17px; }
.num { background: #fff; border: 2px solid #bbb; border-radius: 8px; display: flex; align-items: center; font-size: 26px; color: #111; grid-column: 1; }
.num-w { grid-row: 1; }
.num-h { grid-row: 2; padding-top: 2px; }
.num-ico { width: 24px; height: 20px; margin-left: 9px; margin-right: 11px; flex: none; }
.lock-link { grid-row: 1 / span 2; grid-column: 2; padding-top: 21px; }
.lock-svg { display: block; width: 44px; height: 80px; }
.orient { grid-column: 3; grid-row: 1; display: grid; grid-template-columns: 94px 91px; height: 56px; margin-top: -1px; }
.or-opt { display: flex; align-items: center; justify-content: center; }
.or-on { background: #fff; border-left: 2px solid #e4e4e4; }
.or-p { width: 22px; height: 30px; }
.or-l { width: 32px; height: 22px; }
.fill-box { grid-column: 3; grid-row: 2; background: #fff; border: 2px solid #bbb; border-radius: 8px; display: flex; align-items: center; padding: 2px; }
.fill-ico { width: 30px; height: 30px; margin-left: 6px; margin-right: 9px; flex: none; }
.fill-swatch { flex: 1; height: 100%; border: 2px solid #ddd; border-radius: 3px; background: #fff; }
.link { display: block; width: max-content; font-size: 25.6px; line-height: 30px; color: #2d68dc; border-bottom: 2px dotted #2d68dc; margin-top: 18px; height: 30px; }
.link-first { margin-top: 19px; }
.hide-row { display: flex; align-items: center; margin-top: 15px; gap: 8px; font-size: 25.6px; color: #777; line-height: 36px; white-space: nowrap; }
.check-off { width: 26px; height: 26px; border: 2px solid #777; border-radius: 5px; background: #fff; flex: none; }
.pb-text { padding-top: 41px; padding-bottom: 42px; }
.text-row { display: flex; justify-content: space-between; height: 50px; }
.text-row-2 { margin-top: 16px; }
.combo { height: 50px; background: #fff; border: 2px solid #bbb; border-radius: 6px; display: flex; align-items: center; font-size: 26px; position: relative; padding-top: 2px; }
.combo b { position: absolute; right: 0; top: 0; bottom: 0; width: 40px; border-left: 2px solid #bbb; display: flex; align-items: center; justify-content: center; }
.muted { color: #999; }
.small { font-size: 21px; color: #111; }
.c-font { width: 289px; padding-left: 11px; }
.c-none { width: 163px; padding-left: 9px; }
.c-size { width: 225px; padding-left: 8px; }
.tt-ico { width: 22px; height: 16px; margin-right: 9px; flex: none; }
.combo em { position: absolute; left: 152px; font-style: normal; font-size: 17px; color: #bbb; }
.color-a { width: 225px; height: 50px; background: #fff; border: 2px solid #bbb; border-radius: 8px; display: flex; align-items: center; padding: 2px; }
.a-letter { width: 46px; text-align: center; font-size: 24px; color: #888; flex: none; }
.a-field { flex: 1; height: 100%; border: 2px solid #ddd; border-radius: 4px; text-align: center; color: #888; font-size: 20px; font-weight: 600; line-height: 38px; }
.link-reset { margin-top: 18px; }
.pb-colors { padding-top: 30px; }
.tabs { display: flex; font-size: 26px; line-height: 34px; }
.tab-on { padding: 1px 14px 13px; border-bottom: 4px solid #2e6cf0; color: #2e6cf0; font-weight: 600; }
.tab-off { margin-left: 15px; padding-top: 1px; color: #777; }
.check-row { margin-top: 36px; display: grid; grid-template-columns: 132px 178px auto; }
.check { display: flex; align-items: center; gap: 8px; font-size: 25.5px; line-height: 26px; color: #111; white-space: nowrap; }
.check span { position: relative; top: 1px; }
.check-solo { margin-top: 30px; }
.check-on { width: 26px; height: 26px; border-radius: 5px; background: #3474f0; flex: none; }
.check-on svg { display: block; width: 26px; height: 26px; }
.swatches { margin-top: 40px; display: flex; height: 40px; }
.swatches i { display: block; height: 40px; width: 42px; }
.swatches .sw-2, .swatches .sw-6 { width: 40px; }
.sw-1 { background: #f3ea69; } .sw-2 { background: #122f6f; } .sw-3 { background: #fff; } .sw-4 { background: #bdbdbd; } .sw-5 { background: #222; } .sw-6 { background: #000; }
.hint { margin: 15px 0 0; font-size: 25.5px; line-height: 37px; color: #777; }
```
